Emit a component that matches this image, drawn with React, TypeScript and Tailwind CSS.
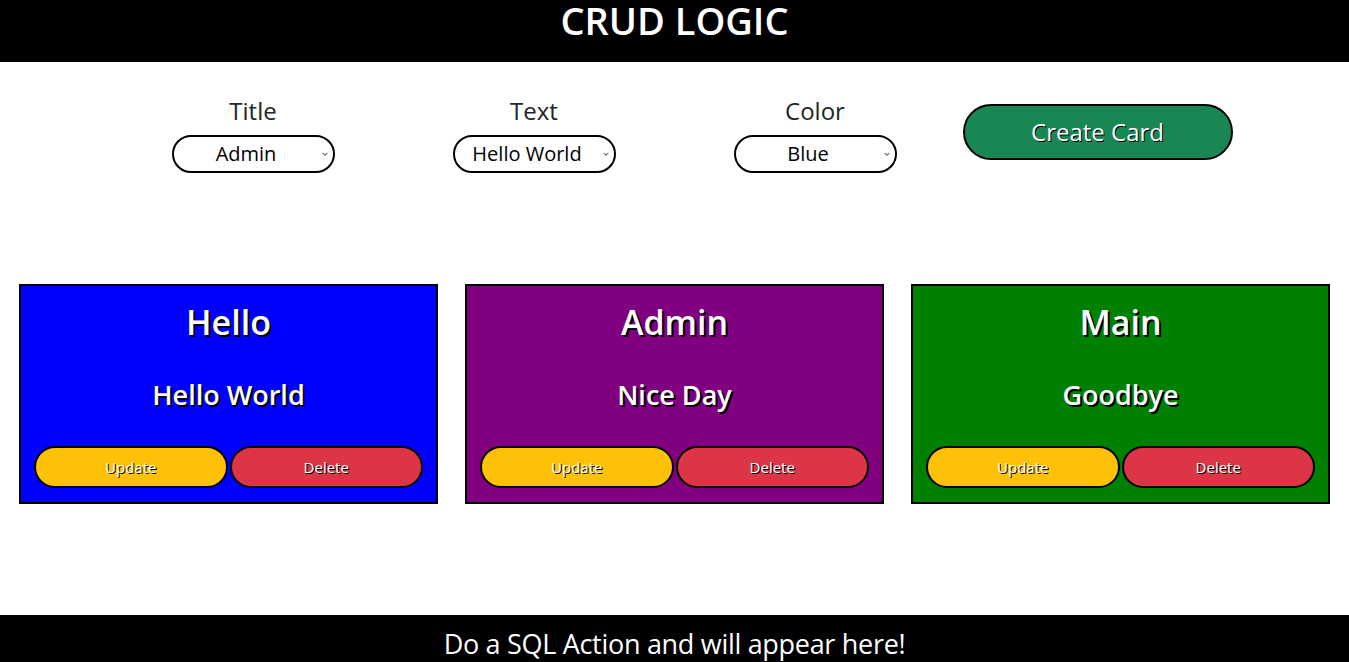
import React, { useState } from "react";

interface Card {
  id: number;
  title: string;
  text: string;
  color: string;
}

const titles = ["Admin", "Hello", "Main"];
const texts = ["Hello World", "Nice Day", "Goodbye"];
const colors = ["Blue", "Purple", "Green"];

const cardBg: Record<string, string> = {
  Blue: "bg-[#0000ff]",
  Purple: "bg-[#800080]",
  Green: "bg-[#008000]",
};

const Chevron = () => (
  <svg
    className="pointer-events-none absolute right-[6px] top-1/2 h-[8px] w-[8px] -translate-y-1/2 text-gray-500"
    viewBox="0 0 10 10"
    fill="none"
    stroke="currentColor"
    strokeWidth="1.4"
  >
    <path d="M2 3.5 L5 6.5 L8 3.5" />
  </svg>
);

const Field: React.FC<{
  label: string;
  value: string;
  options: string[];
  onChange: (v: string) => void;
}> = ({ label, value, options, onChange }) => (
  <div className="flex w-[281px] flex-col items-center">
    <label className="text-[24px] leading-[30px] text-[#212529]">{label}</label>
    <div className="relative mt-[9px]">
      <select
        className="h-[38px] w-[163px] appearance-none rounded-full border-2 border-black bg-white pr-[14px] text-center text-[20px] text-black"
        value={value}
        onChange={(e) => onChange(e.target.value)}
      >
        {options.map((o) => (
          <option key={o} value={o}>
            {o}
          </option>
        ))}
      </select>
      <Chevron />
    </div>
  </div>
);

export default function App() {
  const [title, setTitle] = useState("Admin");
  const [text, setText] = useState("Hello World");
  const [color, setColor] = useState("Blue");
  const [cards] = useState<Card[]>([
    { id: 1, title: "Hello", text: "Hello World", color: "Blue" },
    { id: 2, title: "Admin", text: "Nice Day", color: "Purple" },
    { id: 3, title: "Main", text: "Goodbye", color: "Green" },
  ]);

  return (
    <div className="flex min-h-[662px] flex-col bg-white font-['Open_Sans',sans-serif]">
      <header className="flex h-[62px] justify-center bg-black pt-[1px]">
        <h1 className="text-[38px] font-semibold leading-[38px] text-white">
          CRUD LOGIC
        </h1>
      </header>

      <main className="flex flex-1 flex-col">
        <div className="mt-[34px] flex justify-center">
          <Field label="Title" value={title} options={titles} onChange={setTitle} />
          <Field label="Text" value={text} options={texts} onChange={setText} />
          <Field label="Color" value={color} options={colors} onChange={setColor} />
          <div className="flex w-[281px] justify-center pt-[8px]">
            <button className="ml-[3px] h-[56px] w-[270px] rounded-full border-2 border-black bg-[#198754] text-[24px] text-white [text-shadow:1px_1px_0_#000]">
              Create Card
            </button>
          </div>
        </div>

        <div className="mt-[111px] grid grid-cols-3 gap-[27px] px-[19px]">
          {cards.map((c) => (
            <div
              key={c.id}
              className={`flex h-[220px] flex-col items-center border-2 border-black px-[13px] pb-[14px] text-white ${cardBg[c.color]}`}
            >
              <h2 className="mt-[14px] text-[34px] font-semibold leading-[44px] [text-shadow:2px_2px_0_#000]">
                {c.title}
              </h2>
              <p className="mt-[33px] text-[27px] font-semibold leading-[36px] [text-shadow:2px_2px_0_#000]">
                {c.text}
              </p>
              <div className="mt-auto flex w-full gap-[2px]">
                <button className="h-[42px] flex-1 rounded-full border-2 border-black bg-[#ffc107] text-[15px] text-white [text-shadow:1px_1px_0_#000]">
                  Update
                </button>
                <button className="h-[42px] flex-1 rounded-full border-2 border-black bg-[#dc3545] text-[15px] text-white [text-shadow:1px_1px_0_#000]">
                  Delete
                </button>
              </div>
            </div>
          ))}
        </div>

        <div className="flex-1" />
      </main>

      <footer className="flex h-[47px] items-end justify-center bg-black pb-[1px]">
        <p className="text-[27px] leading-[34px] tracking-[-0.3px] text-white">
          Do a SQL Action and will appear here!
        </p>
      </footer>
    </div>
  );
}
